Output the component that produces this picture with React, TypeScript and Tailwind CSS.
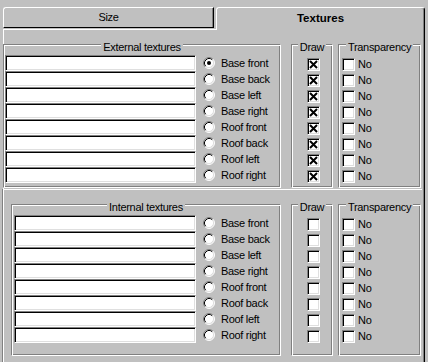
import React from "react";

const rows = ["Base front", "Base back", "Base left", "Base right", "Roof front", "Roof back", "Roof left", "Roof right"];

function Radio({ checked }: { checked?: boolean }) {
  return (
    <svg width="12" height="12" viewBox="0 0 12 12" className="shrink-0">
      <circle cx="6" cy="6" r="5" fill="#fff" />
      <path d="M2.11 9.89 A5.5 5.5 0 0 1 9.89 2.11" fill="none" stroke="#808080" strokeWidth="1" />
      <path d="M9.89 2.11 A5.5 5.5 0 0 1 2.11 9.89" fill="none" stroke="#ffffff" strokeWidth="1" />
      <path d="M2.82 9.18 A4.5 4.5 0 0 1 9.18 2.82" fill="none" stroke="#000" strokeWidth="1" />
      <path d="M9.18 2.82 A4.5 4.5 0 0 1 2.82 9.18" fill="none" stroke="#dfdfdf" strokeWidth="1" />
      {checked && <circle cx="6" cy="6" r="2" fill="#000" />}
    </svg>
  );
}

function Check({ checked }: { checked?: boolean }) {
  return (
    <div className="w-[13px] h-[13px] shrink-0 bg-white border border-t-[#808080] border-l-[#808080] border-b-white border-r-white shadow-[inset_1px_1px_0_#000,inset_-1px_-1px_0_#dfdfdf] relative">
      {checked && (
        <svg width="11" height="11" viewBox="0 0 11 11" className="absolute left-0 top-0">
          <path d="M2 2 L9 9 M9 2 L2 9" stroke="#000" strokeWidth="2" />
        </svg>
      )}
    </div>
  );
}

function Group({ title, className, children }: { title: string; className: string; children: React.ReactNode }) {
  return (
    <div
      className={`relative shrink-0 border border-t-[#808080] border-l-[#808080] border-b-white border-r-white shadow-[inset_1px_1px_0_#fff,inset_-1px_-1px_0_#808080] ${className}`}
    >
      <div className="absolute left-0 right-0 -top-[4px] flex justify-center">
        <span className="bg-[#c0c0c0] px-[2px] leading-[13px]">{title}</span>
      </div>
      {children}
    </div>
  );
}

function Section({ title, checked, groupW, groupH, fieldW, padL }: { title: string; checked: boolean; groupW: string; groupH: string; fieldW: string; padL: string }) {
  return (
    <div className="flex">
      <Group title={title} className={`${groupW} ${groupH} pt-[10px] ${padL}`}>
        <div className="flex flex-col">
          {rows.map((r, i) => (
            <div key={r} className="flex h-[16px] items-center">
              <div className={`${fieldW} h-[16px] bg-white border border-t-[#808080] border-l-[#808080] border-b-white border-r-white shadow-[inset_1px_1px_0_#000,inset_-1px_-1px_0_#dfdfdf]`} />
              <div className="ml-[7px]">
                <Radio checked={checked && i === 0} />
              </div>
              <span className="ml-[6px] leading-[16px] whitespace-nowrap">{r}</span>
            </div>
          ))}
        </div>
      </Group>
      <Group title="Draw" className={`ml-[10px] w-[42px] ${groupH} pt-[13px] pl-[15px]`}>
        <div className="flex flex-col gap-[3px]">
          {rows.map((r) => (
            <Check key={r} checked={checked} />
          ))}
        </div>
      </Group>
      <Group title="Transparency" className={`ml-[5px] w-[83px] ${groupH} pt-[13px] pl-[3px]`}>
        <div className="flex flex-col gap-[3px]">
          {rows.map((r) => (
            <div key={r} className="flex h-[13px] items-center">
              <Check />
              <span className="ml-[3px] leading-[13px]">No</span>
            </div>
          ))}
        </div>
      </Group>
    </div>
  );
}

export default function App() {
  return (
    <div
      className="w-[428px] h-[362px] bg-[#c0c0c0] overflow-hidden text-[11px] tracking-[-0.3px] text-black"
      style={{ fontFamily: '"Liberation Sans", Arial, sans-serif' }}
    >
      <div className="flex h-[30px] pl-[3px]">
        <div className="w-[213px] flex flex-col pt-[7px]">
          <div className="w-[211px] h-[21px] border border-t-white border-l-white border-r-black border-b-black shadow-[inset_-1px_0_0_#808080] rounded-tl-[3px] flex items-center justify-center">
            <span className="text-[11px]">Size</span>
          </div>
          <div className="h-[1px]" />
          <div className="h-[1px] bg-white" />
        </div>
        <div className="w-[209px] mt-[7px] h-[23px] border-t border-l border-r border-t-white border-l-white border-r-black shadow-[inset_-1px_0_0_#808080] rounded-tl-[3px] rounded-tr-[3px] flex items-center justify-center">
          <span className="font-bold text-[11.5px] tracking-normal">Textures</span>
        </div>
      </div>
      <div className="ml-[3px] w-[422px] h-[332px] border-l border-r border-l-white border-r-black shadow-[inset_-1px_0_0_#808080] pt-[14px]">
        <div className="-ml-px">
          <Section title="External textures" checked={true} groupW="w-[278px]" groupH="h-[144px]" fieldW="w-[191px]" padL="pl-[1px]" />
        </div>
        <div className="mt-[1px] mr-[2px] border-t border-t-white shadow-[-1px_0_0_#fff,-2px_0_0_#808080] pt-[14px] pl-[7px] h-[200px]">
          <Section title="Internal textures" checked={false} groupW="w-[270px]" groupH="h-[152px]" fieldW="w-[182px]" padL="pl-[2px]" />
        </div>
      </div>
    </div>
  );
}
